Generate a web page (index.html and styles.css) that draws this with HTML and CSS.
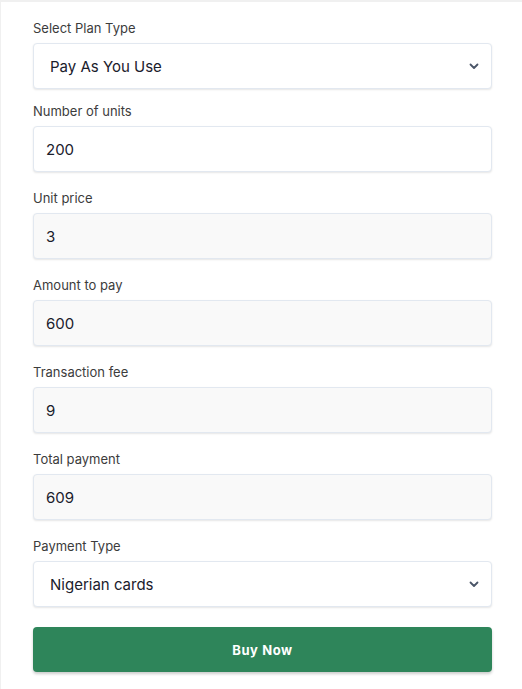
FILE: index.html
```html
<!DOCTYPE html>
<html>
<head>
<meta charset="utf-8">
<link rel="stylesheet" href="styles.css">
</head>
<body>
<div class="card">
  <form class="form">
    <div class="field field-select">
      <label class="label">Select Plan Type</label>
      <div class="select">
        <span class="select-text">Pay As You Use</span>
        <svg class="chev" width="10" height="7" viewBox="0 0 10 7"><path d="M1.5 1.5 L5 5 L8.5 1.5" fill="none" stroke="#4a5568" stroke-width="1.8" stroke-linecap="round" stroke-linejoin="round"/></svg>
      </div>
    </div>
    <div class="field">
      <label class="label">Number of units</label>
      <div class="input">200</div>
    </div>
    <div class="field">
      <label class="label">Unit price</label>
      <div class="input readonly">3</div>
    </div>
    <div class="field">
      <label class="label">Amount to pay</label>
      <div class="input readonly">600</div>
    </div>
    <div class="field">
      <label class="label">Transaction fee</label>
      <div class="input readonly">9</div>
    </div>
    <div class="field">
      <label class="label">Total payment</label>
      <div class="input readonly">609</div>
    </div>
    <div class="field field-select">
      <label class="label">Payment Type</label>
      <div class="select">
        <span class="select-text">Nigerian cards</span>
        <svg class="chev" width="10" height="7" viewBox="0 0 10 7"><path d="M1.5 1.5 L5 5 L8.5 1.5" fill="none" stroke="#4a5568" stroke-width="1.8" stroke-linecap="round" stroke-linejoin="round"/></svg>
      </div>
    </div>
    <button type="button" class="btn">Buy Now</button>
  </form>
</div>
</body>
</html>
```

FILE: styles.css
```css
html, body {
  margin: 0;
  padding: 0;
  background: #f0f0f0;
}
body {
  padding: 2px 0 0 1px;
  font-family: "Inter", "Liberation Sans", sans-serif;
  color: #1a202c;
}
.card {
  background: #ffffff;
  min-height: 700px;
  padding: 18px 30px 0 32px;
}
.form {
  display: flex;
  flex-direction: column;
}
.field {
  display: flex;
  flex-direction: column;
  margin-bottom: 18px;
}
.label {
  font-size: 13px;
  line-height: 16px;
  color: #3c3c3c;
  margin-bottom: 7px;
}
.select, .input {
  box-sizing: border-box;
  height: 46px;
  border: 1px solid #e2e8f0;
  border-radius: 4px;
  box-shadow: 0 1px 2px rgba(0, 0, 0, 0.1);
  background: #ffffff;
  display: flex;
  align-items: center;
}
.select {
  padding: 0 16px;
  justify-content: space-between;
  font-size: 15px;
  color: #1a202c;
}
.chev {
  margin-right: -4px;
}
.input {
  padding: 0 12px;
  font-size: 15px;
  color: #1a202c;
}
.input.readonly {
  background: #f9f9f9;
}
.field-select:first-child {
  margin-bottom: 14px;
}
.btn {
  margin-top: 2px;
  height: 45px;
  border: none;
  border-radius: 4px;
  background: #2e855a;
  color: #ffffff;
  font-family: "Inter", "Liberation Sans", sans-serif;
  font-weight: 700;
  font-size: 13px;
  letter-spacing: 0.6px;
  box-shadow: 0 2px 3px rgba(0, 0, 0, 0.2);
}
```
